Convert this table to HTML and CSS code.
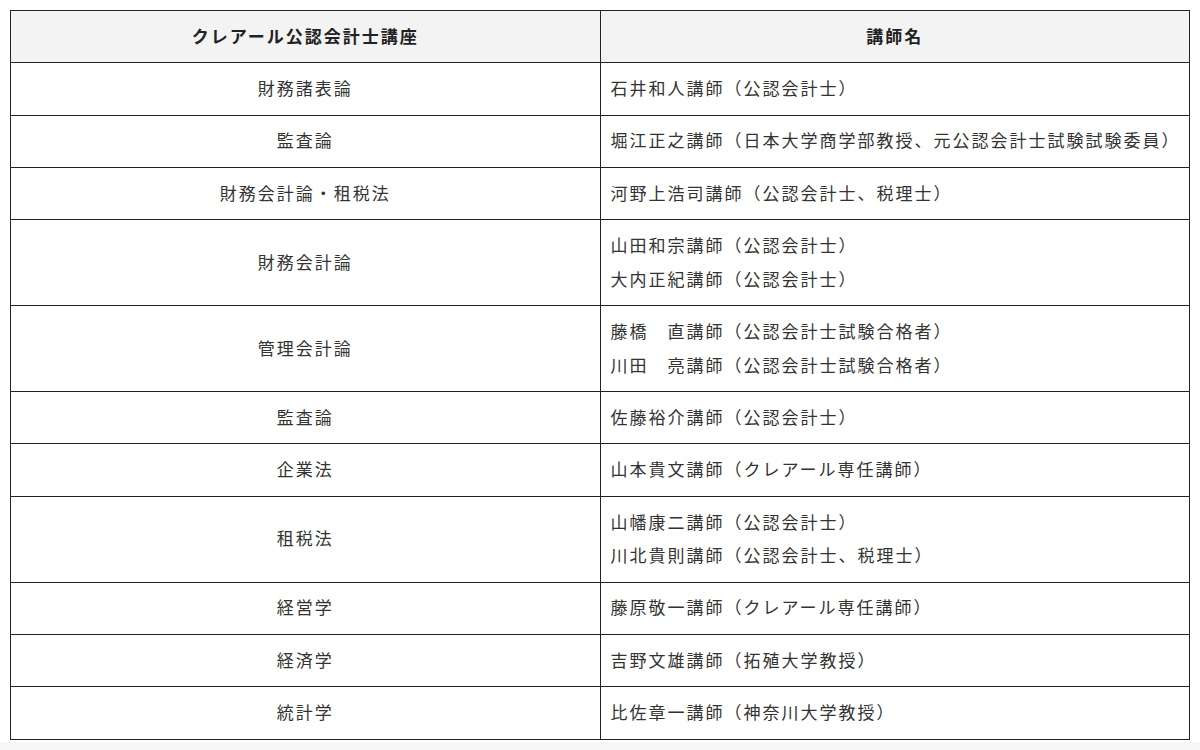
FILE: index.html
```html
<!DOCTYPE html>
<html lang="ja">
<head>
<meta charset="utf-8">
<title>講師紹介</title>
<link rel="stylesheet" href="styles.css">
</head>
<body>
<div class="wrap">
  <table class="lecturers">
    <thead>
      <tr>
        <th>クレアール公認会計士講座</th>
        <th>講師名</th>
      </tr>
    </thead>
    <tbody>
      <tr><td class="subject">財務諸表論</td><td class="name">石井和人講師（公認会計士）</td></tr>
      <tr><td class="subject">監査論</td><td class="name">堀江正之講師（日本大学商学部教授、元公認会計士試験試験委員）</td></tr>
      <tr><td class="subject">財務会計論・租税法</td><td class="name">河野上浩司講師（公認会計士、税理士）</td></tr>
      <tr><td class="subject">財務会計論</td><td class="name">山田和宗講師（公認会計士）<br>大内正紀講師（公認会計士）</td></tr>
      <tr><td class="subject">管理会計論</td><td class="name">藤橋　直講師（公認会計士試験合格者）<br>川田　亮講師（公認会計士試験合格者）</td></tr>
      <tr><td class="subject">監査論</td><td class="name">佐藤裕介講師（公認会計士）</td></tr>
      <tr><td class="subject">企業法</td><td class="name">山本貴文講師（クレアール専任講師）</td></tr>
      <tr><td class="subject">租税法</td><td class="name">山幡康二講師（公認会計士）<br>川北貴則講師（公認会計士、税理士）</td></tr>
      <tr><td class="subject">経営学</td><td class="name">藤原敬一講師（クレアール専任講師）</td></tr>
      <tr><td class="subject">経済学</td><td class="name">吉野文雄講師（拓殖大学教授）</td></tr>
      <tr><td class="subject">統計学</td><td class="name">比佐章一講師（神奈川大学教授）</td></tr>
    </tbody>
  </table>
</div>
<div class="footer-band"></div>
</body>
</html>
```

FILE: styles.css
```css
html, body {
  margin: 0;
  padding: 0;
  background: #ffffff;
}

body {
  font-family: "Noto Sans CJK JP", "Noto Sans", sans-serif;
  color: #333333;
}

.wrap {
  padding: 10px 10px 0 10px;
}

.lecturers {
  width: 100%;
  border-collapse: collapse;
  table-layout: fixed;
  font-size: 17px;
  letter-spacing: 2px;
  line-height: 33.6px;
}

.lecturers th,
.lecturers td {
  border: 1px solid #222222;
  padding: 7.7px 10px 10.05px 10px;
  vertical-align: middle;
}

.lecturers th {
  background: #f3f3f3;
  font-weight: bold;
  color: #222222;
  text-align: center;
}

.lecturers td.subject {
  text-align: center;
}

.lecturers td.name {
  text-align: left;
}

.footer-band {
  margin-top: 2px;
  height: 20px;
  background: #f6f6f6;
}
```
